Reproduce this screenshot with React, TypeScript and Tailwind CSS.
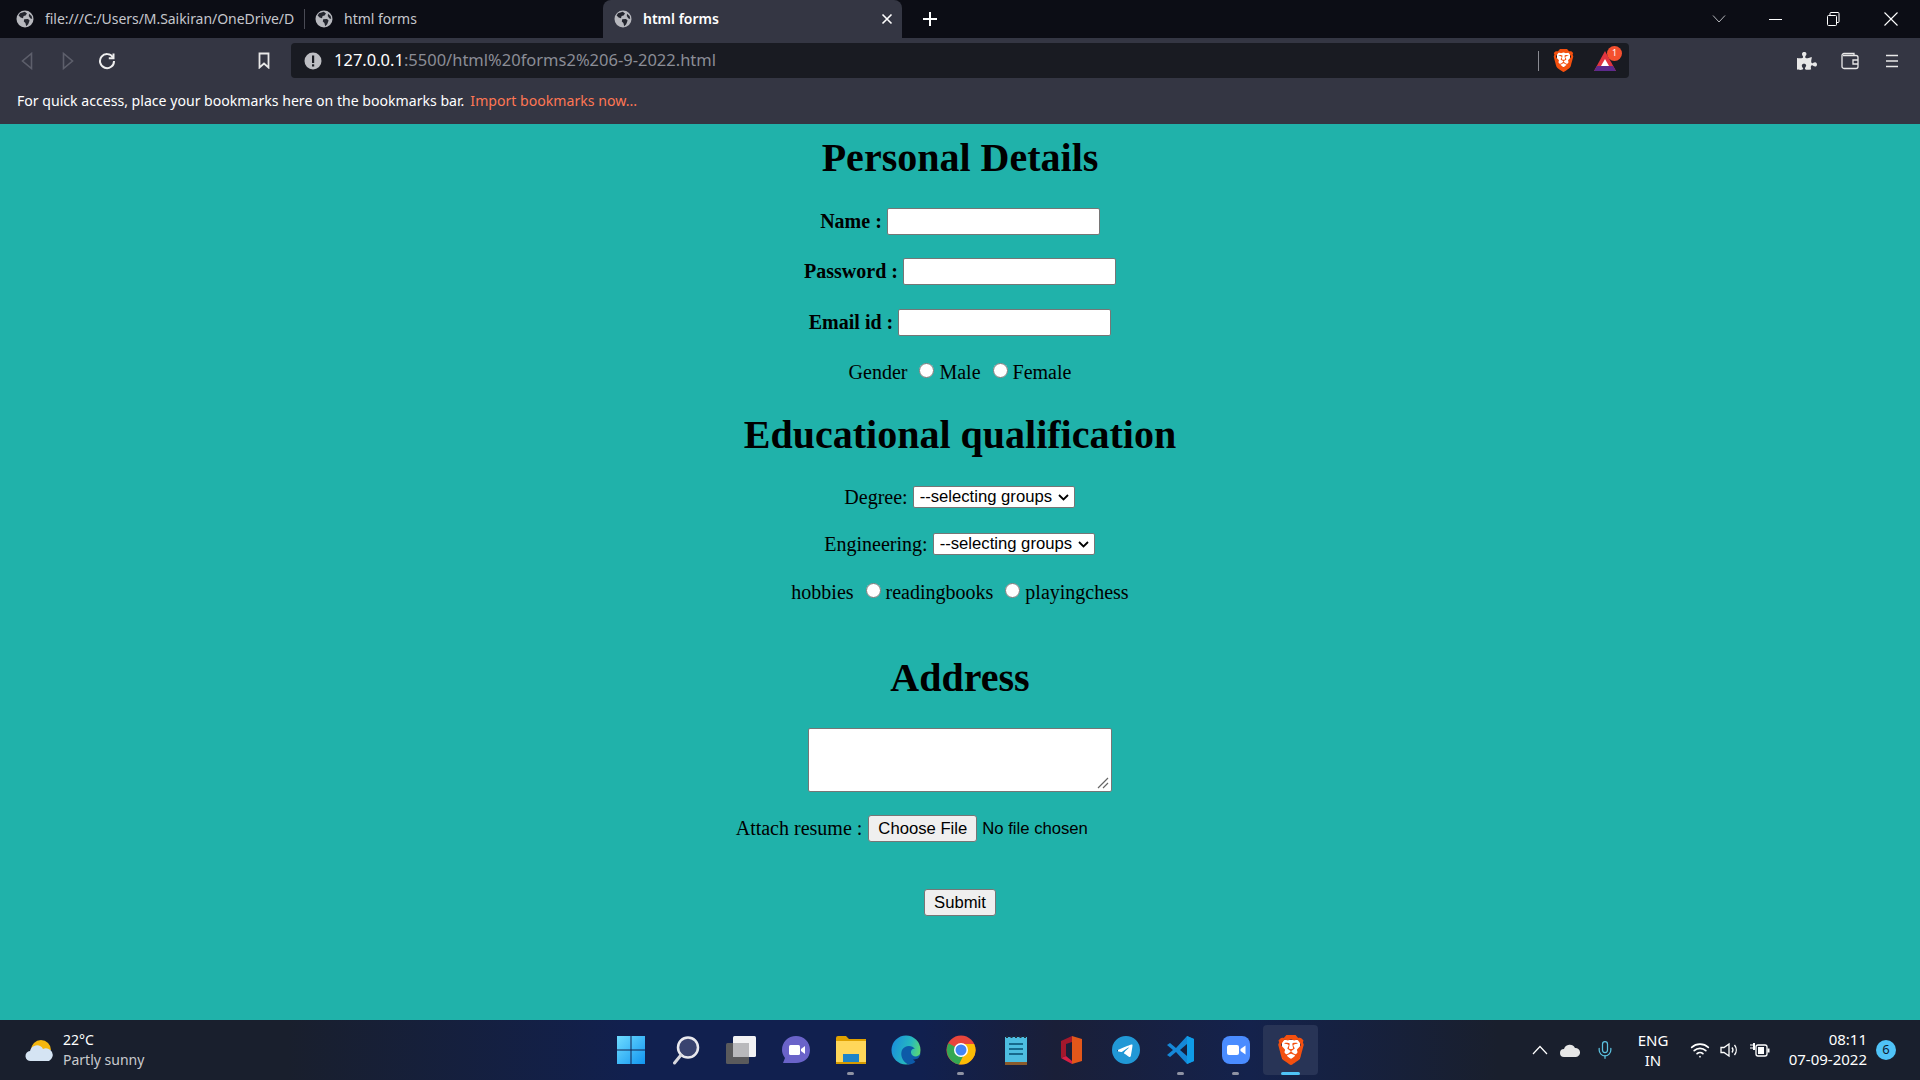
import React from "react";
import { FaPuzzlePiece } from "react-icons/fa";
import { SiBrave, SiTelegram } from "react-icons/si";
import { Mic, Wifi } from "lucide-react";

const Globe = () => (
  <svg width="18" height="18" viewBox="0 0 18 18" className="shrink-0">
    <circle cx="9" cy="9" r="8.5" fill="#b7b8be" />
    <path d="M4 3.2 8.8 1.8 11 3.4 9.6 5.6 7.6 6 7 8.2 4.6 7.6 2.6 5.6Z" fill="#23252e" />
    <path d="M8.2 9.2 12 9l1.6 1.6-1.4 3.6-2 2-.8-3.2-1.6-1.4Z" fill="#23252e" />
    <path d="M13 3.8 15.6 6l.6 3-2-.8-1.4-2.2Z" fill="#23252e" />
  </svg>
);

const BraveLogo = ({ size }: { size: number }) => (
  <span className="relative inline-flex items-center justify-center">
    <span className="absolute left-[20%] top-[15%] h-[65%] w-[60%] bg-white" />
    <SiBrave size={size} color="#f4500f" className="relative" />
  </span>
);

function TabStrip() {
  return (
    <div className="flex h-[38px] items-center bg-[#0c0d15] text-[14px] text-[#c5c6cc]">
      <div className="flex h-full w-[304px] items-center pl-4">
        <Globe />
        <span className="ml-[11px] -translate-y-px whitespace-nowrap tracking-[-0.05px]">file:///C:/Users/M.Saikiran/OneDrive/D</span>
      </div>
      <div className="h-[20px] w-px bg-[#4a4b55]" />
      <div className="flex h-full w-[298px] items-center pl-[10px]">
        <Globe />
        <span className="ml-[11px] -translate-y-px">html forms</span>
      </div>
      <div className="flex h-full w-[299px] items-center rounded-t-[8px] bg-[#343643] pl-[11px] pr-[9px] font-semibold text-white">
        <Globe />
        <span className="ml-[11px] -translate-y-px">html forms</span>
        <svg width="12" height="12" viewBox="0 0 12 12" className="ml-auto" stroke="#fff" strokeWidth="1.6">
          <path d="M1.5 1.5l9 9M10.5 1.5l-9 9" />
        </svg>
      </div>
      <svg width="16" height="16" viewBox="0 0 16 16" className="ml-[20px]" stroke="#fff" strokeWidth="2">
        <path d="M8 1v14M1 8h14" />
      </svg>
      <div className="ml-auto flex items-center">
        <svg width="14" height="8" viewBox="0 0 14 8" fill="none" stroke="#b5b6bb">
          <path d="M1 .5l6 6.5 6-6.5" />
        </svg>
        <div className="ml-[43px] h-px w-[13px] bg-white" />
        <svg width="14" height="14" viewBox="0 0 14 14" fill="none" stroke="#fff" className="ml-[44px]">
          <rect x="1.5" y="3.5" width="9" height="10" rx="1" />
          <path d="M4 3.5v-2a1 1 0 0 1 1-1h7a1 1 0 0 1 1 1v8a1 1 0 0 1-1 1h-1.500" />
        </svg>
        <svg width="14" height="14" viewBox="0 0 14 14" fill="none" stroke="#fff" strokeWidth="1.100" className="ml-[44px] mr-[22px]">
          <path d="M.5.5l13 13M13.500.5l-13 13" />
        </svg>
      </div>
    </div>
  );
}

function Toolbar() {
  return (
    <div className="flex h-[45px] items-start bg-[#343643] pt-[5px]">
      <div className="flex h-[35px] w-[291px] items-center">
        <svg width="12" height="18" viewBox="0 0 12 18" fill="none" stroke="#5d5f6b" strokeWidth="1.600" className="ml-[21px]">
          <path d="M10.500 1.500v15L1.500 9Z" />
        </svg>
        <svg width="12" height="18" viewBox="0 0 12 18" fill="none" stroke="#5d5f6b" strokeWidth="1.600" className="ml-[29px]">
          <path d="M1.500 1.500v15l9-7.500Z" />
        </svg>
        <svg width="18" height="18" viewBox="0 0 18 18" fill="none" stroke="#eeeeee" strokeWidth="2" className="ml-[24px]">
          <path d="M15 5.500A7 7 0 1 0 16 9" />
          <path d="M15.500 1.500v4.700h-4.700" />
        </svg>
        <svg width="12" height="17" viewBox="0 0 12 17" fill="none" stroke="#e8e8e8" strokeWidth="1.800" className="ml-[142px]">
          <path d="M1.500 1.500h9v14L6 11.500l-4.500 4Z" />
        </svg>
      </div>
      <div className="flex h-[35px] w-[1338px] items-center rounded-[4px] bg-[#191b22]">
        <svg width="18" height="18" viewBox="0 0 18 18" className="ml-[13px]">
          <circle cx="9" cy="9" r="8.500" fill="#bdbec3" />
          <rect x="8" y="3.500" width="2.200" height="7.500" fill="#191b22" />
          <rect x="8" y="12.300" width="2.200" height="2.200" fill="#191b22" />
        </svg>
        <span className="ml-[12px] text-[16.500px] text-[#8b8d96]">
          <span className="text-white">127.0.0.1</span>:5500/html%20forms2%206-9-2022.html
        </span>
        <div className="ml-auto h-[20px] w-px bg-[#8a8b92]" />
        <span className="ml-[13px] flex">
          <BraveLogo size={23} />
        </span>
        <span className="relative ml-[18px] mr-[12px] flex">
          <svg width="24" height="24" viewBox="0 0 24 24">
            <path d="M12 2 23 22H1Z" fill="#e0353f" />
            <path d="M1 22 4 17h16l3 5Z" fill="#5d2a8c" />
            <path d="M12 10l4 7H8Z" fill="#fff" />
          </svg>
          <span className="absolute -right-[5px] -top-[3px] flex h-[15px] w-[15px] items-center justify-center rounded-full bg-[#f4502f] text-[9px] text-white">
            1
          </span>
        </span>
      </div>
      <div className="flex h-[35px] flex-1 items-center">
        <FaPuzzlePiece size={20} color="#e8e8e8" className="ml-[168px]" />
        <svg width="20" height="18" viewBox="0 0 20 18" fill="none" stroke="#e8e8e8" strokeWidth="1.300" className="ml-[23px]">
          <path d="M3 3.500h13a2 2 0 0 1 2 2v9a2 2 0 0 1-2 2H4a2 2 0 0 1-2-2V3.500a2 2 0 0 1 2-2h10v2" />
          <path d="M18 8h-5v4h5" />
        </svg>
        <svg width="14" height="14" viewBox="0 0 14 14" stroke="#e8e8e8" strokeWidth="1.400" className="ml-[25px]">
          <path d="M1 1.500h12M1 7h12M1 12.500h12" />
        </svg>
      </div>
    </div>
  );
}

function BookmarksBar() {
  return (
    <div className="flex h-[41px] items-start bg-[#343643] pl-[17px] pt-[7px] text-[14.100px] text-white">
      <span>For quick access, place your bookmarks here on the bookmarks bar.</span>
      <span className="ml-[6px] text-[#ff7654]">Import bookmarks now...</span>
    </div>
  );
}

const rowClass = "flex h-[30px] items-center justify-center";
const headingClass = "text-center text-[40px] font-bold leading-[46px] text-black";
const fieldClass = "h-[27px] w-[213px] rounded-[2px] border border-[#767676] bg-white";
const radioClass = "ml-[12px] mr-[5px] h-[15px] w-[15px] -translate-y-[2px]";

const GroupSelect = () => (
  <span className="relative mr-px flex">
    <select className="h-[22px] w-[162px] appearance-none rounded-[2px] border border-[#767676] bg-white pl-[6px] font-['Liberation_Sans',sans-serif] text-[16.670px] leading-[18px]">
      <option>--selecting groups</option>
    </select>
    <svg width="11" height="7" viewBox="0 0 11 7" fill="none" stroke="#000" strokeWidth="1.800" className="absolute right-[6px] top-[8px]">
      <path d="M1 1l4.500 4.500L10 1" />
    </svg>
  </span>
);

function FormArea() {
  return (
    <main className="flex-1 bg-[#20b2aa] pt-[11px] font-['Liberation_Serif',serif] text-[20px] text-black">
      <h1 className={headingClass}>Personal Details</h1>
      <div className={`${rowClass} mt-[25px] gap-[5px] font-bold`}>
        <label>Name :</label>
        <input type="text" className={fieldClass} />
      </div>
      <div className={`${rowClass} mt-[20px] gap-[5px] font-bold`}>
        <label>Password :</label>
        <input type="password" className={fieldClass} />
      </div>
      <div className={`${rowClass} mt-[21px] gap-[5px] font-bold`}>
        <label>Email id :</label>
        <input type="email" className={fieldClass} />
      </div>
      <div className={`${rowClass} mt-[20px]`}>
        <span>Gender</span>
        <input type="radio" name="gender" className={radioClass} />
        <span>Male</span>
        <input type="radio" name="gender" className={radioClass} />
        <span>Female</span>
      </div>

      <h1 className={`${headingClass} mt-[25px]`}>Educational qualification</h1>
      <div className={`${rowClass} mt-[24px] gap-[5px]`}>
        <label>Degree:</label>
        <GroupSelect />
      </div>
      <div className={`${rowClass} mt-[17px] gap-[5px]`}>
        <label>Engineering:</label>
        <GroupSelect />
      </div>
      <div className={`${rowClass} mt-[18px]`}>
        <span>hobbies</span>
        <input type="radio" name="hobby" className={radioClass} />
        <span>readingbooks</span>
        <input type="radio" name="hobby" className={radioClass} />
        <span>playingchess</span>
      </div>

      <h1 className={`${headingClass} mt-[48px]`}>Address</h1>
      <div className="mt-[27px] flex justify-center">
        <span className="relative flex">
          <textarea className="h-[64px] w-[304px] resize-none rounded-[2px] border border-[#767676] bg-white" />
          <svg width="12" height="12" viewBox="0 0 12 12" stroke="#666" strokeWidth="1.200" className="absolute bottom-[3px] right-[3px]">
            <path d="M1 11 11 1M6 11l5-5" />
          </svg>
        </span>
      </div>
      <div className={`${rowClass} mt-[21px] gap-[6px]`}>
        <label>Attach resume :</label>
        <input
          type="file"
          className="w-[316px] font-['Liberation_Sans',sans-serif] text-[16.670px] file:mr-[5px] file:h-[27px] file:w-[109px] file:rounded-[3px] file:border file:border-[#767676] file:bg-[#efefef] file:text-[16.670px]"
        />
      </div>
      <div className="mt-[46px] flex justify-center">
        <button className="h-[27px] w-[72px] rounded-[3px] border border-[#767676] bg-[#efefef] font-['Liberation_Sans',sans-serif] text-[16.670px]">
          Submit
        </button>
      </div>
    </main>
  );
}

const TaskIcons: { el: React.ReactNode; dot?: boolean; active?: boolean }[] = [
  {
    el: (
      <svg width="30" height="30" viewBox="0 0 30 30">
        <defs>
          <linearGradient id="win" x1="0" y1="0" x2="1" y2="1">
            <stop offset="0" stopColor="#6fdcff" />
            <stop offset="1" stopColor="#1195f0" />
          </linearGradient>
        </defs>
        <path d="M1 1h13.500v13.500H1ZM15.500 1H29v13.500H15.500ZM1 15.500h13.500V29H1ZM15.500 15.500H29V29H15.500Z" fill="url(#win)" />
      </svg>
    ),
  },
  {
    el: (
      <svg width="30" height="30" viewBox="0 0 30 30" fill="none">
        <circle cx="17" cy="12.500" r="10" fill="#3a4470" stroke="#e9e9ee" strokeWidth="2.500" />
        <path d="M10 20 3.500 28" stroke="#d8d8de" strokeWidth="3" strokeLinecap="round" />
      </svg>
    ),
  },
  {
    el: (
      <svg width="30" height="30" viewBox="0 0 30 30">
        <rect x="0" y="8" width="23" height="21" rx="1.500" fill="#5a5a5c" />
        <rect x="7" y="1" width="23" height="21" rx="1.500" fill="#f2f2f4" />
        <rect x="7" y="8" width="16" height="14" fill="#b9b9bc" />
      </svg>
    ),
  },
  {
    el: (
      <svg width="30" height="30" viewBox="0 0 30 30">
        <path d="M15 1c8 0 14 6 14 14s-6 13-14 13H2l2-5C2 20 1 18 1 15 1 7 7 1 15 1Z" fill="#6a63c9" />
        <rect x="8" y="10" width="11" height="10" rx="1.500" fill="#fff" />
        <path d="M20 14l4-3v8l-4-3Z" fill="#fff" />
      </svg>
    ),
  },
  {
    el: (
      <svg width="30" height="30" viewBox="0 0 30 30">
        <path d="M0 3a2 2 0 0 1 2-2h8l3 3h17v8H0Z" fill="#e0a100" />
        <path d="M0 6h30v22H0Z" fill="#ffd75a" />
        <path d="M7 19h16v8H7Z" fill="#1d84c9" />
        <path d="M0 27h30v2H0Z" fill="#d69a00" />
      </svg>
    ),
    dot: true,
  },
  {
    el: (
      <svg width="30" height="30" viewBox="0 0 30 30">
        <defs>
          <linearGradient id="edge" x1="0" y1="0.300" x2="1" y2="0.600">
            <stop offset="0" stopColor="#1a8fdc" />
            <stop offset="0.600" stopColor="#26b8c0" />
            <stop offset="1" stopColor="#5fd86f" />
          </linearGradient>
        </defs>
        <circle cx="15" cy="15" r="14.500" fill="url(#edge)" />
        <path d="M30 18C27 23 21 22 20 18c-.500-3 2-5 4-4-3-4-10-4-13 1-2 5 0 11 6 14.500C22 30 27 26 30 18Z" fill="#0d5aa8" />
        <path d="M30 19c-2 5-5 5.500-8 5.500l6 5.500h2Z" fill="#11204f" />
      </svg>
    ),
  },
  {
    el: (
      <svg width="30" height="30" viewBox="0 0 30 30">
        <circle cx="15" cy="15" r="14.500" fill="#e8453c" />
        <path d="M15 15 2.500 8.200A14.500 14.500 0 0 0 13 29.400L22 15Z" fill="#34a853" />
        <path d="M15 9h13.200A14.500 14.500 0 0 1 13 29.400L20 15Z" fill="#fbbc05" />
        <circle cx="15" cy="15" r="7" fill="#fff" />
        <circle cx="15" cy="15" r="5.500" fill="#4285f4" />
      </svg>
    ),
    dot: true,
  },
  {
    el: (
      <svg width="30" height="30" viewBox="0 0 30 30">
        <rect x="4" y="2" width="22" height="26" fill="#4dbde0" />
        <rect x="4" y="27" width="22" height="3" fill="#8a5a2b" />
        <path d="M6 3V1M10.500 3V1M15 3V1M19.500 3V1M24 3V1" stroke="#22303f" strokeWidth="2" />
        <path d="M8 9h14M8 14h14M8 19h14" stroke="#17698c" strokeWidth="2" />
      </svg>
    ),
  },
  {
    el: (
      <svg width="30" height="30" viewBox="0 0 30 30">
        <path d="M16 1 26 4v22l-10 3Z" fill="#e2571a" />
        <path d="M16 1 5 6v17l5-2V9l6-2Z" fill="#a3182c" />
        <path d="M5 23l11 6v-3l-6-5Z" fill="#d81f44" />
      </svg>
    ),
  },
  {
    el: (
      <span className="relative flex">
        <span className="absolute left-[6px] top-[6px] h-[16px] w-[16px] bg-white" />
        <SiTelegram size={28} color="#2198d6" className="relative" />
      </span>
    ),
  },
  {
    el: (
      <svg width="30" height="30" viewBox="0 0 30 30">
        <path d="M21 1 10 13 4 8 1 10l6 5-6 5 3 2 6-5 11 12 7-3V4Z" fill="#1588d8" />
        <path d="M21 1l7 3v22l-7 3Z" fill="#0f9ce8" />
        <path d="M21 9l-7 6 7 6Z" fill="#15203f" />
      </svg>
    ),
    dot: true,
  },
  {
    el: (
      <svg width="30" height="30" viewBox="0 0 30 30">
        <rect x="1" y="1" width="28" height="28" rx="8" fill="#4a8cff" />
        <rect x="6" y="10" width="12" height="10" rx="2" fill="#fff" />
        <path d="M19.500 14l5-3.500v9l-5-3.500Z" fill="#fff" />
      </svg>
    ),
    dot: true,
  },
  { el: <BraveLogo size={30} />, active: true },
];

function Taskbar() {
  return (
    <footer className="flex h-[60px] items-center bg-[linear-gradient(90deg,#191f2d_0%,#191f2d_15%,#11204f_33%,#11204f_48%,#1a1f38_55%,#14224c_65%,#191f2d_78%,#191f2d_100%)] font-['Noto_Sans',sans-serif] text-[14px] text-white">
      <div className="flex w-[603px] items-center pl-[25px]">
        <svg width="30" height="28" viewBox="0 0 30 28">
          <path d="M6 14a10 10 0 0 1 20 0Z" fill="#f4b60f" />
          <path d="M6 25a5 5 0 0 1-1-10 7 7 0 0 1 13-2 6 6 0 0 1 6 12Z" fill="#d5e4f3" />
        </svg>
        <div className="ml-[8px] leading-[20px]">
          <div>22°C</div>
          <div className="text-[#c9cacd]">Partly sunny</div>
        </div>
      </div>
      <div className="flex">
        {TaskIcons.map((t, i) => (
          <div
            key={i}
            className={`relative flex h-[50px] w-[55px] items-center justify-center rounded-[4px] ${t.active ? "bg-[#283456]" : ""}`}
          >
            {t.el}
            {t.dot && <span className="absolute bottom-0 h-[3px] w-[7px] rounded-full bg-[#8f93a3]" />}
            {t.active && <span className="absolute bottom-0 h-[3px] w-[19px] rounded-full bg-[#4fc3f7]" />}
          </div>
        ))}
      </div>
      <div className="flex flex-1 items-center">
        <svg width="16" height="10" viewBox="0 0 16 10" fill="none" stroke="#fff" strokeWidth="1.200" className="ml-[214px]">
          <path d="M1 9l7-7.500L15 9" />
        </svg>
        <svg width="20" height="13" viewBox="0 0 20 13" className="ml-[12px]">
          <path d="M4 13a4 4 0 0 1 0-8 6 6 0 0 1 11-1 4.500 4.500 0 0 1 1 9Z" fill="#e6e6e6" />
        </svg>
        <Mic size={20} color="#5bc0de" strokeWidth={1.500} className="ml-[15px]" />
        <div className="ml-[18px] w-[40px] text-center text-[15px] leading-[20px]">
          <div>ENG</div>
          <div>IN</div>
        </div>
        <Wifi size={20} strokeWidth={2} className="ml-[17px]" />
        <svg width="20" height="20" viewBox="0 0 20 20" fill="none" stroke="#fff" strokeWidth="1.300" className="ml-[9px]">
          <path d="M2 7.500h3L10 4v12l-5-3.500H2Z" />
          <path d="M13 7.500a4 4 0 0 1 0 5M15.500 5a8 8 0 0 1 0 10" />
        </svg>
        <svg width="20" height="16" viewBox="0 0 20 16" className="ml-[11px]">
          <path d="M0 3h3M0 6h3" stroke="#fff" strokeWidth="1.200" />
          <path d="M3 1h2v7H3Z" fill="#fff" />
          <rect x="6" y="3" width="11" height="11" rx="2" fill="none" stroke="#fff" strokeWidth="1.300" />
          <rect x="8" y="5" width="6" height="7" fill="#fff" />
          <rect x="17.500" y="6.500" width="2" height="4" fill="#fff" />
        </svg>
        <div className="ml-auto -translate-y-px text-right text-[15px] leading-[20px]">
          <div>08:11</div>
          <div>07-09-2022</div>
        </div>
        <span className="ml-[9px] mr-[24px] flex h-[20px] w-[20px] items-center justify-center rounded-full bg-[#4fc3f7] text-[13px] text-[#10202f]">
          6
        </span>
      </div>
    </footer>
  );
}

export default function App() {
  return (
    <div className="flex h-screen flex-col overflow-hidden font-['Noto_Sans',sans-serif]">
      <TabStrip />
      <Toolbar />
      <BookmarksBar />
      <FormArea />
      <Taskbar />
    </div>
  );
}
